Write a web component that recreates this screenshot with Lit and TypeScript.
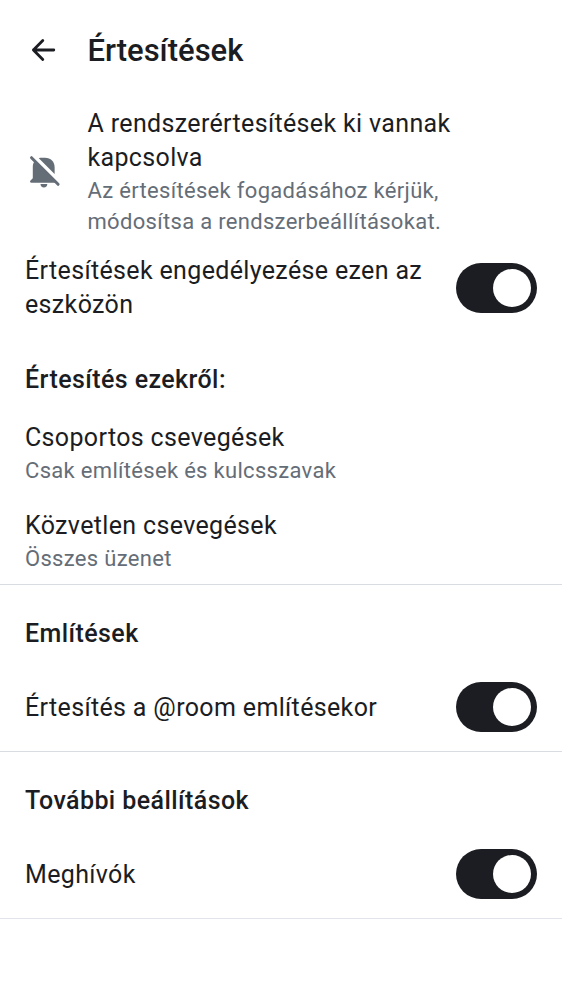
import { LitElement, html, css, nothing } from "lit";
import { customElement, property } from "lit/decorators.js";

@customElement("toggle-switch")
class ToggleSwitch extends LitElement {
  static styles = css`
    :host { display: block; flex: none; width: 81px; height: 50px; }
    .track { box-sizing: border-box; width: 81px; height: 50px; border-radius: 25px; background: #1b1d22; display: flex; align-items: center; justify-content: flex-end; padding-right: 6px; }
    .thumb { width: 38px; height: 38px; border-radius: 50%; background: #fff; }
  `;
  render() {
    return html`<div class="track" role="switch" aria-checked="true"><div class="thumb"></div></div>`;
  }
}

@customElement("setting-row")
class SettingRow extends LitElement {
  @property() label = "";
  @property() detail = "";
  static styles = css`
    :host { display: block; }
    .label { font-size: 25px; line-height: 34px; letter-spacing: 0.35px; color: #1b1d22; white-space: pre-line; }
    .detail { font-size: 22px; line-height: 31px; letter-spacing: 0.31px; color: #656d77; white-space: pre-line; }
  `;
  render() {
    return html`<div class="label">${this.label}</div>
      ${this.detail ? html`<div class="detail">${this.detail}</div>` : nothing}`;
  }
}

@customElement("app-root")
class AppRoot extends LitElement {
  static styles = css`
    :host { display: block; height: 1000px; overflow: hidden; background: #fff; color: #1b1d22; font-family: Roboto, sans-serif; }
    .bar { display: flex; align-items: center; height: 100px; padding-left: 25px; gap: 24.5px; }
    .bar svg, .notice svg { width: 38px; height: 38px; flex: none; }
    h1 { margin: 0; padding-top: 2px; font-size: 31px; font-weight: 500; line-height: 40px; }
    .notice { display: flex; align-items: center; gap: 24.5px; padding: 7px 25px 0; height: 130px; }
    .row { display: flex; align-items: center; justify-content: space-between; padding: 0 25px; }
    .device { height: 68px; margin-top: 16.5px; }
    h2 { margin: 0; padding: 0 25px; font-size: 25px; font-weight: 500; line-height: 34px; letter-spacing: 0.42px; }
    .about { padding-top: 41.5px; }
    .groups { padding: 24px 25px 0; }
    .direct { padding: 22.5px 25px 10.5px; }
    .section { border-top: 1px solid #d9dce0; padding-top: 32px; height: 134px; }
    .section .row { height: 50px; margin-top: 31px; }
    .section setting-row { padding-top: 2px; }
    .end { border-top: 1px solid #e1e4e8; }
  `;
  render() {
    return html`
      <header class="bar">
        <svg viewBox="0 0 38 38" fill="none" stroke="#1b1d22" stroke-width="2.8" stroke-linecap="round" stroke-linejoin="round"><path d="M28.8 19H8.4M17.8 9.4 8.4 19l9.4 9.6"/></svg>
        <h1>Értesítések</h1>
      </header>
      <section class="notice">
        <svg viewBox="0 0 38 38" fill="#656d77">
          <path d="M6.5 4.7 33.1 31.3" stroke="#656d77" stroke-width="3" stroke-linecap="round"/>
          <path d="M9.6 8.2 31.1 29.7H6.4c-1.4 0-1.8-1.4-.9-2.3L7.8 25.2V14c0-2.5.6-4.3 1.8-5.8Z"/>
          <path d="M13.8 5.2c.8-.4 1.7-.5 2.6-.5h3.6c5.8 0 9.6 4 9.6 9.6v6.7Z"/>
          <path d="M15.5 31h6.8c0 2-1.4 3.5-3.4 3.5S15.5 33 15.5 31Z"/>
        </svg>
        <setting-row label=${"A rendszerértesítések ki vannak\nkapcsolva"} detail=${"Az értesítések fogadásához kérjük,\nmódosítsa a rendszerbeállításokat."}></setting-row>
      </section>
      <div class="row device"><setting-row label=${"Értesítések engedélyezése ezen az\neszközön"}></setting-row><toggle-switch></toggle-switch></div>
      <h2 class="about">Értesítés ezekről:</h2>
      <div class="groups"><setting-row label="Csoportos csevegések" detail="Csak említések és kulcsszavak"></setting-row></div>
      <div class="direct"><setting-row label="Közvetlen csevegések" detail="Összes üzenet"></setting-row></div>
      <section class="section"><h2>Említések</h2><div class="row"><setting-row label="Értesítés a @room említésekor"></setting-row><toggle-switch></toggle-switch></div></section>
      <section class="section"><h2>További beállítások</h2><div class="row"><setting-row label="Meghívók"></setting-row><toggle-switch></toggle-switch></div></section>
      <div class="end"></div>
    `;
  }
}
